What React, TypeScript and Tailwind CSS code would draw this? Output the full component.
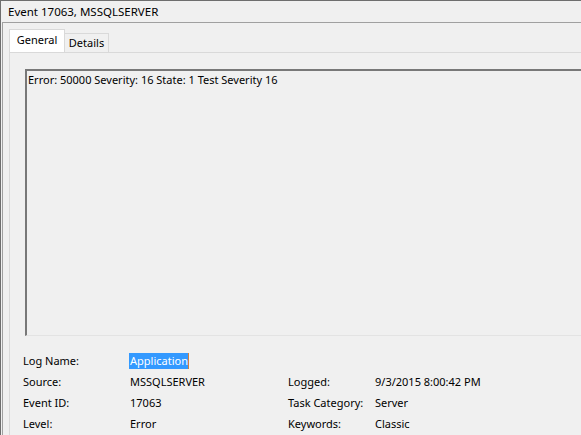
import React from "react";

const font = { fontFamily: '"Noto Sans", "DejaVu Sans", sans-serif' };

function Row({ label, value, label2, value2, selected }: { label: string; value: string; label2?: string; value2?: string; selected?: boolean }) {
  return (
    <div className="flex h-[21px] items-center">
      <div className="w-[107px] shrink-0">{label}</div>
      <div className="w-[158px] shrink-0">
        {selected ? (
          <span className="relative -ml-[1px] bg-[#3399ff] pl-[1px] pr-[1px] pb-[1px] text-white">
            {value}
            <span className="absolute right-0 top-0 h-full w-[1px] bg-[#d08040]" />
          </span>
        ) : (
          value
        )}
      </div>
      <div className="w-[87px] shrink-0">{label2}</div>
      <div>{value2}</div>
    </div>
  );
}

export default function App() {
  return (
    <div
      className="h-[435px] w-[581px] overflow-hidden border-l border-t border-[#6e6e6e] bg-[#f0f0f0] pl-[1px] text-[11px] text-black"
      style={font}
    >
      <div className="flex h-[21px] items-center pl-[6px] pt-[1px] text-[11.5px]">Event 17063, MSSQLSERVER</div>
      <div className="h-full border-l border-t border-[#a0a0a0] pl-[6px] pt-[6px]">
        <div className="flex h-[23px] items-end">
          <div className="flex h-[23px] w-[56px] items-center justify-center border-l border-r border-t border-[#d9d9d9] bg-white pb-[2px]">
            General
          </div>
          <div className="flex h-[19px] w-[44px] items-center justify-center border-r border-t border-[#d9d9d9] bg-[#f0f0f0]">
            Details
          </div>
        </div>
        <div className="h-full border-l border-t border-[#d9d9d9] pl-[15px] pt-[16px]">
          <div className="h-[267px] border-l-2 border-t-2 border-b border-l-[#787878] border-t-[#787878] border-b-[#e3e3e3] bg-[#f0f0f0] pl-[1px] pt-[1px]">
            Error: 50000 Severity: 16 State: 1 Test Severity 16
          </div>
          <div className="-ml-[2px] pt-[15px]">
            <Row label="Log Name:" value="Application" selected />
            <Row label="Source:" value="MSSQLSERVER" label2="Logged:" value2="9/3/2015 8:00:42 PM" />
            <Row label="Event ID:" value="17063" label2="Task Category:" value2="Server" />
            <Row label="Level:" value="Error" label2="Keywords:" value2="Classic" />
          </div>
        </div>
      </div>
    </div>
  );
}
